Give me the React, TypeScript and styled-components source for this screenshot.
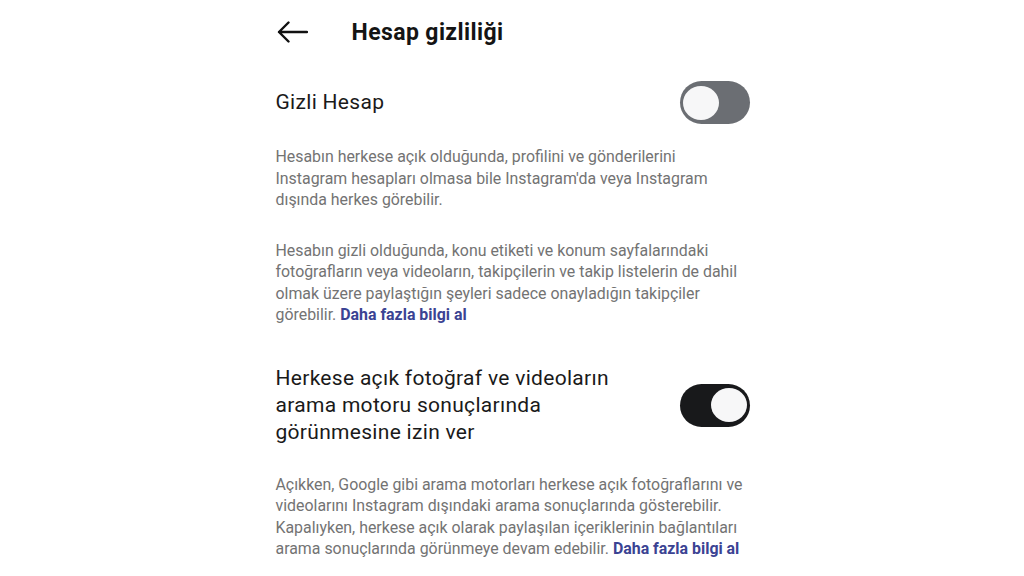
import React from "react";
import styled, { createGlobalStyle } from "styled-components";

const GlobalStyle = createGlobalStyle`
  html, body {
    margin: 0;
    padding: 0;
    background: #ffffff;
  }
  body {
    font-family: Roboto, "Liberation Sans", sans-serif;
    -webkit-font-smoothing: antialiased;
  }
`;

const Page = styled.div`
  width: 1024px;
  height: 576px;
  overflow: hidden;
  display: flex;
  justify-content: center;
`;

const Column = styled.div`
  width: 474px;
  margin-left: 1px;
  display: flex;
  flex-direction: column;
`;

const Header = styled.header`
  height: 64px;
  display: flex;
  align-items: center;
  gap: 44px;
`;

const BackButton = styled.button`
  border: none;
  background: none;
  padding: 0;
  margin-left: 1px;
  width: 31px;
  height: 24px;
  display: flex;
  align-items: center;
  cursor: pointer;
  color: #111111;
`;

const Title = styled.h1`
  margin: 0;
  font-size: 23px;
  font-weight: 700;
  color: #141414;
  letter-spacing: 0.4px;
`;

const SettingRow = styled.div<{ $top: number }>`
  display: flex;
  align-items: center;
  justify-content: space-between;
  margin-top: ${(p) => p.$top}px;
`;

const SettingLabel = styled.div`
  font-size: 21px;
  line-height: 27px;
  letter-spacing: 0.3px;
  color: #1a1a1a;
  max-width: 370px;
`;

const Track = styled.div<{ $on: boolean }>`
  width: 70px;
  height: 43px;
  border-radius: 22px;
  background: ${(p) => (p.$on ? "#18191b" : "#6b6e73")};
  display: flex;
  align-items: center;
  justify-content: ${(p) => (p.$on ? "flex-end" : "flex-start")};
  padding: 0 3px;
  box-sizing: border-box;
  flex-shrink: 0;
`;

const Knob = styled.div`
  width: 36px;
  height: 34px;
  border-radius: 50%;
  background: #f7f7f8;
`;

const Description = styled.p<{ $top: number }>`
  margin: ${(p) => p.$top}px 0 0;
  max-width: 470px;
  font-size: 15.9px;
  line-height: 21.5px;
  color: #737373;
`;

const Link = styled.a`
  color: #3b4393;
  font-weight: 700;
  text-decoration: none;
`;

const Toggle = ({ on }: { on: boolean }) => (
  <Track $on={on}>
    <Knob />
  </Track>
);

export default function App() {
  return (
    <>
      <GlobalStyle />
      <Page>
        <Column>
          <Header>
            <BackButton aria-label="Geri">
              <svg width="31" height="22" viewBox="0 0 31 22" fill="none">
                <path
                  d="M30 11H2M11.5 1.5L2 11l9.5 9.5"
                  stroke="currentColor"
                  strokeWidth="2.4"
                  strokeLinecap="round"
                  strokeLinejoin="round"
                />
              </svg>
            </BackButton>
            <Title>Hesap gizliliği</Title>
          </Header>

          <SettingRow $top={17}>
            <SettingLabel>Gizli Hesap</SettingLabel>
            <Toggle on={false} />
          </SettingRow>

          <Description $top={22}>
            Hesabın herkese açık olduğunda, profilini ve gönderilerini
            Instagram hesapları olmasa bile Instagram'da veya Instagram
            dışında herkes görebilir.
          </Description>

          <Description $top={29}>
            Hesabın gizli olduğunda, konu etiketi ve konum sayfalarındaki
            fotoğrafların veya videoların, takipçilerin ve takip listelerin de
            dahil olmak üzere paylaştığın şeyleri sadece onayladığın takipçiler
            görebilir. <Link href="#">Daha fazla bilgi al</Link>
          </Description>

          <SettingRow $top={39}>
            <SettingLabel>
              Herkese açık fotoğraf ve videoların arama motoru sonuçlarında
              görünmesine izin ver
            </SettingLabel>
            <Toggle on={true} />
          </SettingRow>

          <Description $top={28}>
            Açıkken, Google gibi arama motorları herkese açık fotoğraflarını ve
            videolarını Instagram dışındaki arama sonuçlarında gösterebilir.
            Kapalıyken, herkese açık olarak paylaşılan içeriklerinin
            bağlantıları arama sonuçlarında görünmeye devam edebilir.{" "}
            <Link href="#">Daha fazla bilgi al</Link>
          </Description>
        </Column>
      </Page>
    </>
  );
}
